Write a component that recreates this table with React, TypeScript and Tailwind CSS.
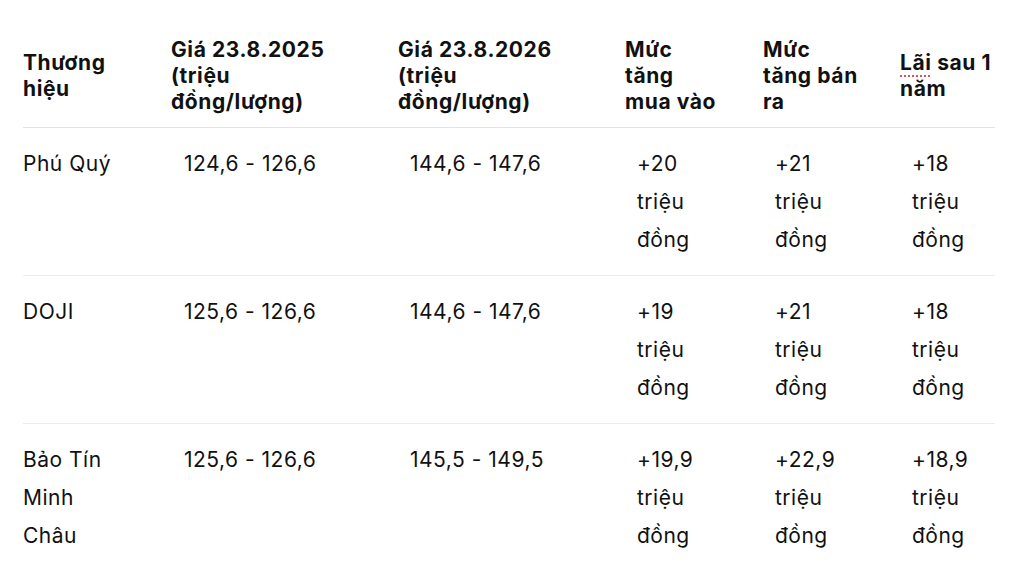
import React from "react";

const rows = [
  {
    brand: ["Phú Quý"],
    y2025: "124,6 - 126,6",
    y2026: "144,6 - 147,6",
    buy: "+20",
    sell: "+21",
    profit: "+18",
  },
  {
    brand: ["DOJI"],
    y2025: "125,6 - 126,6",
    y2026: "144,6 - 147,6",
    buy: "+19",
    sell: "+21",
    profit: "+18",
  },
  {
    brand: ["Bảo Tín", "Minh", "Châu"],
    y2025: "125,6 - 126,6",
    y2026: "145,5 - 149,5",
    buy: "+19,9",
    sell: "+22,9",
    profit: "+18,9",
  },
];

const Lines = ({ items }: { items: string[] }) => (
  <>
    {items.map((t, i) => (
      <span key={i} className="block whitespace-nowrap">
        {t}
      </span>
    ))}
  </>
);

const Amount = ({ value }: { value: string }) => (
  <Lines items={[value, "triệu", "đồng"]} />
);

const App = () => {
  return (
    <div
      className="min-h-[586px] bg-white pl-[23px] pt-[37px] text-[#111111]"
      style={{ fontFamily: "Inter, 'Noto Sans', sans-serif" }}
    >
      <table className="w-[972px] table-fixed border-collapse">
        <colgroup>
          <col className="w-[148px]" />
          <col className="w-[227px]" />
          <col className="w-[227px]" />
          <col className="w-[138px]" />
          <col className="w-[137px]" />
          <col className="w-[95px]" />
        </colgroup>
        <thead>
          <tr className="border-b border-[#e3e3e3] text-left align-middle text-[21px] font-bold leading-[26px] tracking-[0.6px]">
            <th className="pb-3">
              <Lines items={["Thương", "hiệu"]} />
            </th>
            <th className="pb-3">
              <Lines items={["Giá 23.8.2025", "(triệu", "đồng/lượng)"]} />
            </th>
            <th className="pb-3">
              <Lines items={["Giá 23.8.2026", "(triệu", "đồng/lượng)"]} />
            </th>
            <th className="pb-3">
              <Lines items={["Mức", "tăng", "mua vào"]} />
            </th>
            <th className="pb-3">
              <Lines items={["Mức", "tăng bán", "ra"]} />
            </th>
            <th className="pb-3">
              <span className="block whitespace-nowrap">
                <span className="underline decoration-[#d9534f] decoration-dotted decoration-2 underline-offset-[5px]">
                  Lãi
                </span>{" "}
                sau 1
              </span>
              <span className="block">năm</span>
            </th>
          </tr>
        </thead>
        <tbody>
          {rows.map((r, i) => (
            <tr
              key={i}
              className={`align-top text-[21px] leading-[38px] tracking-[0.5px] ${
                i < rows.length - 1 ? "border-b border-[#ececec]" : ""
              }`}
            >
              <td className="h-[148px] pt-[17px]">
                <Lines items={r.brand} />
              </td>
              <td className="pl-[13px] pt-[17px] whitespace-nowrap">{r.y2025}</td>
              <td className="pl-3 pt-[17px] whitespace-nowrap">{r.y2026}</td>
              <td className="pl-3 pt-[17px]">
                <Amount value={r.buy} />
              </td>
              <td className="pl-3 pt-[17px]">
                <Amount value={r.sell} />
              </td>
              <td className="pl-3 pt-[17px]">
                <Amount value={r.profit} />
              </td>
            </tr>
          ))}
        </tbody>
      </table>
    </div>
  );
};

export default App;
